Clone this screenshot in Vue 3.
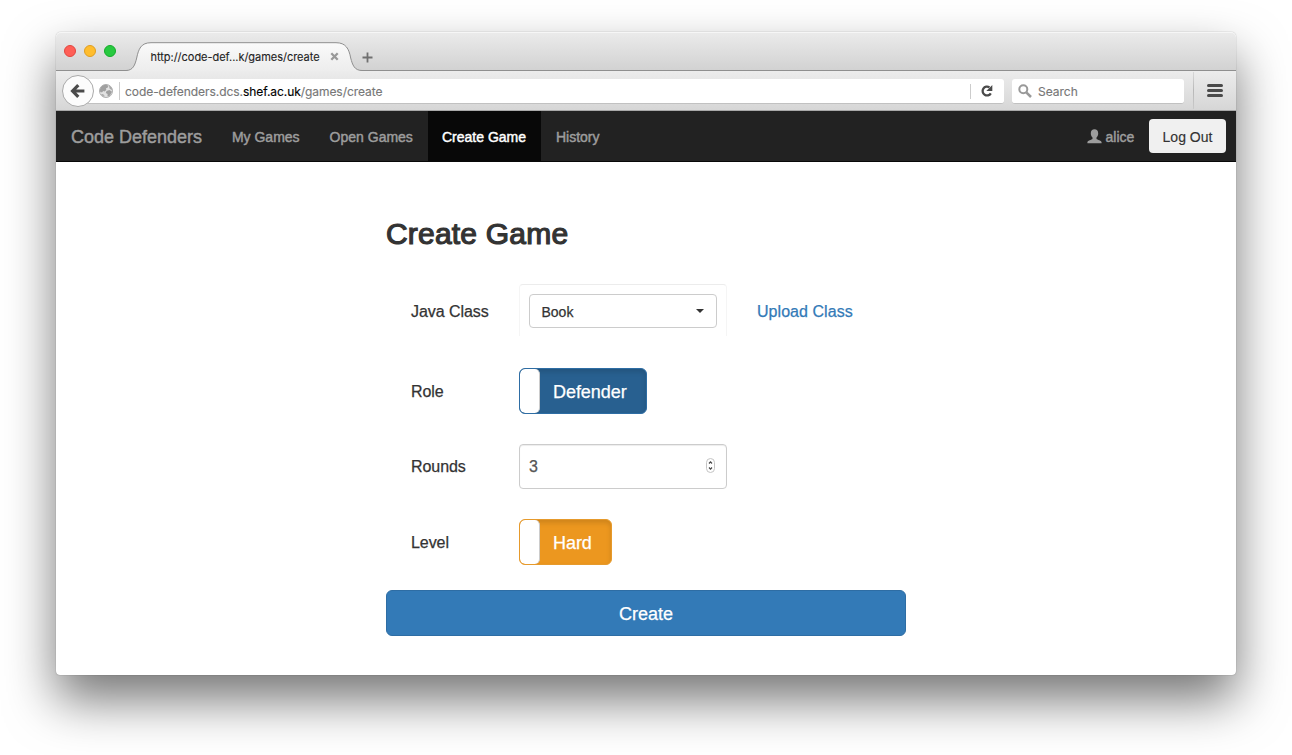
<script setup>
import { ref } from 'vue'

const navItems = [
  { label: 'My Games', size: 'w98' },
  { label: 'Open Games', size: 'w113' },
  { label: 'Create Game', size: 'w113', active: true },
  { label: 'History', size: 'w74' },
]
const role = ref('Defender')
const level = ref('Hard')
const rounds = ref(3)
</script>

<template>
  <main class="desktop">
    <section class="window">
      <header class="tabbar">
        <div class="lights"><i class="red"></i><i class="yellow"></i><i class="green"></i></div>
        <div class="tab">
          <svg class="tab-shape" width="240" height="31" viewBox="0 0 240 31">
            <defs>
              <linearGradient id="tabFill" x1="0" y1="0" x2="0" y2="1">
                <stop offset="0" stop-color="#fafafa" />
                <stop offset="1" stop-color="#ececec" />
              </linearGradient>
            </defs>
            <path d="M0 31V28.500H2C9 28.500 11 23 12.700 16C14.500 7 17 .7 27 .7H212C222 .7 225 7 226.700 16C228.500 23 230.500 28.500 238 28.500H240V31Z" fill="url(#tabFill)" />
            <path d="M0 28.500H2C9 28.500 11 23 12.700 16C14.500 7 17 .7 27 .7H212C222 .7 225 7 226.700 16C228.500 23 230.500 28.500 238 28.500H240" fill="none" stroke="#8f8f8f" />
          </svg>
          <span class="tab-title">http://code-def...k/games/create</span>
          <svg class="tab-close" width="9" height="9" viewBox="0 0 9 9"><path d="M1.300 1.300L7.700 7.700M7.700 1.300L1.300 7.700" stroke="#999" stroke-width="2.300" /></svg>
        </div>
        <svg class="plus" width="11" height="11" viewBox="0 0 11 11"><path d="M5.500 .5V10.500M.5 5.500H10.500" stroke="#707070" stroke-width="1.800" /></svg>
      </header>

      <div class="toolbar">
        <button class="back">
          <svg width="16" height="16" viewBox="0 0 16 16"><path d="M8.300 2.200L2.600 8L8.300 13.800M3.200 8H14.400" fill="none" stroke="#4b4b4b" stroke-width="3.200" /></svg>
        </button>
        <div class="urlbar">
          <svg class="globe" width="14" height="14" viewBox="0 0 14 14">
            <circle cx="7" cy="7" r="6.500" fill="#e2e2e2" stroke="#b0b0b0" />
            <path d="M1 5.500C1.500 2.500 4 .8 7 .7L9.500 1.800L8.500 3.800L7 4.200L7.300 6L5.500 7.500L4.200 7L3 8.500L.8 7.500Z" fill="#a0a0a0" />
            <path d="M10 1.500C11.800 2.500 13 4 13.300 6L12 5.500L10.500 4.400Z" fill="#a8a8a8" />
            <path d="M7.500 7L10.500 6L13 7.800L11.800 10L10 12.500L8.500 12L8.600 9.900L6.800 9Z" fill="#a0a0a0" />
            <path d="M2 10L4 10L5.500 11.500L5.200 13C3.700 12.500 2.600 11.500 2 10Z" fill="#b0b0b0" />
          </svg>
          <span class="bar"></span>
          <span class="url">code-defenders.dcs.<b>shef.ac.uk</b>/games/create</span>
          <span class="bar tail"></span>
          <svg class="reload" width="14" height="14" viewBox="0 0 14 14">
            <path d="M9.500 3.400A4.400 4.400 0 1 0 10.800 9.300" fill="none" stroke="#4a4a4a" stroke-width="2.300" />
            <path d="M12.300 1V7H6.300Z" fill="#4a4a4a" />
          </svg>
        </div>
        <div class="search">
          <svg width="14" height="14" viewBox="0 0 14 14"><circle cx="5.300" cy="5.300" r="4" fill="none" stroke="#999" stroke-width="2" /><path d="M8.300 8.300L13 13" stroke="#999" stroke-width="2.500" /></svg>
          <span>Search</span>
        </div>
        <i class="divider"></i>
        <div class="menu"><svg width="16" height="13" viewBox="0 0 16 13"><path d="M1.500 1.500H14.500M1.500 6.500H14.500M1.500 11.500H14.500" stroke="#4a4a4a" stroke-width="3" stroke-linecap="round" /></svg></div>
      </div>

      <nav class="navbar">
        <a class="brand">Code Defenders</a>
        <a v-for="item in navItems" :key="item.label" class="item" :class="[item.size, { active: item.active }]">{{ item.label }}</a>
        <span class="user">
          <svg width="15" height="15" viewBox="0 0 15 15"><path d="M7.500 .3C9.700 .3 11.200 1.700 11.200 4.200C11.200 6.200 10.500 7.700 9.500 8.600V9.900C10.300 10.700 14.600 11.300 14.600 13.200V14.300H.4V13.200C.4 11.300 4.700 10.700 5.500 9.900V8.600C4.500 7.700 3.800 6.200 3.800 4.200C3.800 1.700 5.300 .3 7.500 .3Z" fill="#9d9d9d" /></svg>
          <span>alice</span>
        </span>
        <button class="logout">Log Out</button>
      </nav>

      <form class="form" @submit.prevent>
        <h2>Create Game</h2>
        <div class="row row-class">
          <label>Java Class</label>
          <div class="well">
            <div class="select"><span>Book</span><i class="caret"></i></div>
          </div>
          <a class="upload">Upload Class</a>
        </div>
        <div class="row row-role">
          <label>Role</label>
          <div class="toggle primary"><i class="handle"></i><span>{{ role }}</span></div>
        </div>
        <div class="row row-rounds">
          <label>Rounds</label>
          <div class="number">
            <span>{{ rounds }}</span>
            <svg width="9" height="15" viewBox="0 0 9 15"><rect x=".5" y=".5" width="8" height="14" rx="4" fill="#fff" stroke="#c4c4c4" /><path d="M3 5.500L4.500 3.900L6 5.500M3 9.500L4.500 11.100L6 9.500" fill="none" stroke="#444" stroke-width="1.200" /></svg>
          </div>
        </div>
        <div class="row row-level">
          <label>Level</label>
          <div class="toggle warning"><i class="handle"></i><span>{{ level }}</span></div>
        </div>
        <button class="create">Create</button>
      </form>
    </section>
  </main>
</template>

<style>
body { margin: 0; background: #fff; }
</style>

<style scoped>
* { box-sizing: border-box; }
.desktop { width: 1292px; height: 755px; padding: 32px 56px 80px; overflow: hidden; font-family: "Liberation Sans", Arial, sans-serif; color: #333; }
button { font-family: inherit; margin: 0; padding: 0; }
svg { display: block; flex: none; }
.window { display: flex; flex-direction: column; width: 1180px; height: 643px; background: #fff; border-radius: 5px 5px 4px 4px; box-shadow: 0 0 1px rgba(0,0,0,.5), 0 25px 50px rgba(0,0,0,.54); }

.tabbar { display: flex; height: 39px; flex: none; background: linear-gradient(#ebebeb, #d2d2d2); border-bottom: 1px solid #8f8f8f; border-radius: 5px 5px 0 0; box-shadow: inset 0 1px #f6f6f6; }
.lights { display: flex; gap: 8px; padding: 13px 0 0 8px; width: 68px; }
.lights i { width: 12px; height: 12px; border-radius: 50%; border: 1px solid; }
.red { background: #ff5f57; border-color: #e2463f !important; }
.yellow { background: #ffbd2e; border-color: #e09e20 !important; }
.green { background: #28c940; border-color: #14ac2a !important; }
.tab { display: grid; grid-template-columns: 26px 178px 36px; width: 240px; height: 31px; margin-top: 10px; }
.tab-shape { grid-area: 1 / 1 / 2 / 4; }
.tab-title { grid-area: 1 / 2; align-self: start; padding: 7px 0 0 .5px; font: 11px/16px Inter, sans-serif; letter-spacing: -.03px; color: #222; white-space: nowrap; -webkit-text-stroke: .1px; }
.tab-close { grid-area: 1 / 3; margin: 10px 0 0 1.5px; justify-self: start; }
.plus { margin: 20px 0 0 -2.5px; }

.toolbar { display: flex; height: 40px; flex: none; padding-left: 6px; background: linear-gradient(#ececec, #d6d6d6); border-bottom: 1px solid #a9a9a9; }
.back { display: grid; place-items: center; width: 32px; height: 32px; margin-top: 4px; border: 1px solid #aaa; border-radius: 50%; background: #fcfcfc; z-index: 1; }
.back svg { margin-left: -1px; }
.urlbar { display: flex; align-items: center; width: 920px; height: 25px; margin: 8px 0 0 -10px; padding-left: 15px; background: #fff; border-radius: 0 3px 3px 0; border-bottom: 1px solid #c1c1c1; }
.bar { width: 1px; height: 18px; margin-left: 6px; background: #ccc; }
.bar.tail { margin-left: auto; height: 15px; }
.url { margin-left: 5px; padding-top: 2px; font: 12px/18px Inter, sans-serif; letter-spacing: -.06px; color: #777; white-space: nowrap; -webkit-text-stroke: .15px; }
.url b { font-weight: 400; color: #000; }
.reload { margin: 0 10px 0 9px; }
.search { display: flex; align-items: center; gap: 6px; width: 172px; height: 25px; margin: 8px 0 0 8px; padding-left: 6px; border-radius: 3px; background: #fff; border-bottom: 1px solid #c1c1c1; font: 12px/18px Inter, sans-serif; color: #777; -webkit-text-stroke: .15px; }
.search span { padding-top: 2px; }
.divider { width: 1px; height: 37px; margin: 1px 0 0 9px; background: linear-gradient(#d8d8d8, #b8b8b8 50%, #cacaca); }
.menu { padding: 13px 0 0 13px; }

.navbar { display: flex; height: 51px; flex: none; background: #222; border-bottom: 1px solid #080808; color: #9d9d9d; font-size: 14px; line-height: 20px; -webkit-text-stroke: .45px; }
.brand { width: 161px; padding: 16px 0 0 15px; font-size: 18px; white-space: nowrap; }
.item { padding: 16px .5px 0 0; text-align: center; white-space: nowrap; }
.w98 { width: 98px; } .w113 { width: 113px; } .w74 { width: 74px; }
.active { background: #080808; color: #fff; padding-right: 1px; }
.user { display: flex; gap: 3.5px; width: 62px; margin-left: auto; padding-top: 16px; }
.user svg { margin-top: 2px; }
.logout { width: 77px; height: 34px; margin: 8px 10px 0 0; border: 0; border-radius: 4px; background: #f0f0f0; color: #333; font-size: 14px; line-height: 20px; padding-top: 2px; -webkit-text-stroke: .15px; }

.form { display: flex; flex-direction: column; width: 520px; margin-left: 330px; font-size: 16px; -webkit-text-stroke: .25px; }
h2 { height: 34px; margin: 54px 0 0; padding-top: 1px; font-size: 30px; line-height: 34px; font-weight: 400; letter-spacing: .2px; -webkit-text-stroke: 1.2px #333; }
.row { display: grid; grid-template-columns: 108px 208px 1fr; padding-left: 25px; align-items: center; }
label { white-space: nowrap; padding-top: 1px; letter-spacing: -.06px; }
.row-class { height: 54px; margin-top: 34px; }
.row-role { height: 46px; margin-top: 30px; }
.row-rounds { height: 45px; margin-top: 30px; }
.row-level { height: 46px; margin-top: 30px; }
.well { align-self: start; height: 52px; padding: 9px; border: 1px solid #f5f5f5; border-top-color: #ececec; border-bottom: 0; border-radius: 4px 4px 0 0; }
.select { display: flex; align-items: center; justify-content: space-between; height: 34px; padding: 2px 12px 0 11.5px; border: 1px solid #ccc; border-radius: 4px; font-size: 14px; }
.caret { border: 4px solid transparent; border-top-color: #333; border-bottom: 0; margin-top: -3px; }
.upload { padding: 1px 0 0 30px; color: #337ab7; white-space: nowrap; letter-spacing: .05px; }
.toggle { display: flex; height: 46px; border: 1px solid; border-radius: 6px; overflow: hidden; color: #fff; font-size: 18px; line-height: 46px; box-shadow: inset 0 3px 5px rgba(0,0,0,.125); }
.primary { width: 128px; background: #286090; border-color: #2e6da4; }
.warning { width: 93px; background: #ec971f; border-color: #e69a2c; }
.handle { width: 20px; background: #fff; border-radius: 5px; border-right: 1px solid #ccc; }
.toggle span { padding-left: 13px; letter-spacing: -.05px; }
.number { display: flex; align-items: center; justify-content: space-between; height: 45px; padding: 0 11px 0 9px; border: 1px solid #ccc; border-radius: 4px; box-shadow: inset 0 1px 1px rgba(0,0,0,.075); color: #555; }
.number svg { margin-top: -2px; }
.create { height: 46px; margin-top: 25px; padding-top: 2px; border: 1px solid #2e6da4; border-radius: 6px; background: #337ab7; color: #fff; font-size: 18px; -webkit-text-stroke: .25px; }
</style>
